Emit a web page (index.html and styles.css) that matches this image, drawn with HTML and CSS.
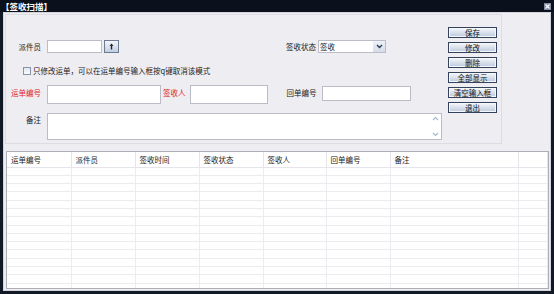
FILE: index.html
```html
<!DOCTYPE html>
<html lang="zh-CN">
<head>
    <meta charset="UTF-8">
    <meta name="viewport" content="width=device-width, initial-scale=1.0">
    <title>签收扫描</title>
    <link rel="stylesheet" href="styles.css">
</head>
<body>
    <div class="window">
        <div class="titlebar">
            <span class="title">【签收扫描】</span>
            <span class="close">
                <svg width="7" height="7" viewBox="0 0 7 7"><path d="M1.5 1.5 L5.5 5.5 M5.5 1.5 L1.5 5.5" stroke="#fff" stroke-width="1.2"/></svg>
            </span>
        </div>
        <div class="body">
            <div class="panel">
                <div class="fields">
                    <div class="row row-courier">
                        <label class="lbl">派件员</label>
                        <input type="text" class="box courier">
                        <button class="pick">
                            <svg width="5" height="7" viewBox="0 0 5 7"><path d="M2.5 0.5 L4.5 3 L3.2 3 L3.2 6.5 L1.8 6.5 L1.8 3 L0.5 3 Z" fill="#1c2436"/></svg>
                        </button>
                        <label class="lbl status-lbl">签收状态</label>
                        <div class="select">
                            <span class="select-text">签收</span>
                            <span class="select-arrow">
                                <svg width="7" height="5" viewBox="0 0 7 5"><path d="M1 1 L3.5 3.5 L6 1" stroke="#2a3550" stroke-width="1.3" fill="none"/></svg>
                            </span>
                        </div>
                    </div>
                    <div class="row row-check">
                        <span class="check"></span>
                        <span>只修改运单，可以在运单编号输入框按q键取消该模式</span>
                    </div>
                    <div class="row row-numbers">
                        <label class="lbl red">运单编号</label>
                        <input type="text" class="box waybill">
                        <label class="lbl red signer-lbl">签收人</label>
                        <input type="text" class="box signer">
                        <label class="lbl receipt-lbl">回单编号</label>
                        <input type="text" class="box receipt">
                    </div>
                    <div class="row row-memo">
                        <label class="lbl">备注</label>
                        <div class="memo">
                            <textarea></textarea>
                            <div class="scroll">
                                <svg width="7" height="5" viewBox="0 0 7 5"><path d="M1 4 L3.5 1.5 L6 4" stroke="#a8b8d0" stroke-width="1.2" fill="none"/></svg>
                                <svg width="7" height="5" viewBox="0 0 7 5"><path d="M1 1 L3.5 3.5 L6 1" stroke="#a8b8d0" stroke-width="1.2" fill="none"/></svg>
                            </div>
                        </div>
                    </div>
                </div>
                <div class="actions">
                    <button>保存</button>
                    <button>修改</button>
                    <button>删除</button>
                    <button>全部显示</button>
                    <button>清空输入框</button>
                    <button>退出</button>
                </div>
            </div>

            <div class="grid">
                <table>
                    <colgroup>
                        <col style="width: 64px">
                        <col style="width: 64px">
                        <col style="width: 64px">
                        <col style="width: 64px">
                        <col style="width: 63px">
                        <col style="width: 64px">
                        <col style="width: 128px">
                        <col>
                    </colgroup>
                    <thead>
                        <tr>
                            <th>运单编号</th>
                            <th>派件员</th>
                            <th>签收时间</th>
                            <th>签收状态</th>
                            <th>签收人</th>
                            <th>回单编号</th>
                            <th>备注</th>
                            <th></th>
                        </tr>
                    </thead>
                    <tbody id="rows"></tbody>
                </table>
            </div>
        </div>
    </div>

    <script>
        // empty grid rows
        const rows = document.getElementById('rows');
        for (let i = 0; i < 15; i++) {
            const tr = document.createElement('tr');
            for (let j = 0; j < 8; j++) {
                tr.appendChild(document.createElement('td'));
            }
            rows.appendChild(tr);
        }
    </script>
</body>
</html>
```

FILE: styles.css
```css
* {
    box-sizing: border-box;
}

body {
    margin: 0;
    font-family: "Noto Sans CJK SC", "DejaVu Sans", sans-serif;
    font-size: 7.5px;
    color: #1a1a1a;
    background-color: #141b28;
}

.window {
    width: 554px;
    height: 294px;
    display: flex;
    flex-direction: column;
    background-color: #121926;
}

.titlebar {
    height: 12px;
    display: flex;
    justify-content: space-between;
    align-items: center;
    padding: 0 3px 0 1px;
    background-color: #0b111c;
}

.title {
    color: #fff;
    font-weight: bold;
    font-size: 8.5px;
    line-height: 12px;
}

.close {
    width: 7px;
    height: 7px;
    display: flex;
    background-color: #7f8ca0;
}

.body {
    flex: 1;
    margin: 0 3px 3px 3px;
    border: 1px solid #d4d4dc;
    background-color: #eeedf2;
    display: flex;
    flex-direction: column;
}

.panel {
    margin: 1px 0 0 1px;
    width: 497px;
    height: 130px;
    border: 1px solid #dddce4;
    display: flex;
}

.fields {
    flex: 1;
    padding-top: 25px;
}

.row {
    display: flex;
    align-items: center;
}

.lbl {
    width: 35px;
    text-align: right;
    margin-right: 6px;
    white-space: nowrap;
}

.red {
    color: #e0242c;
}

.box {
    border: 1px solid #bcbcc6;
    background-color: #fff;
    padding: 0;
    margin: 0;
    font: inherit;
    outline: none;
}

.courier {
    width: 55px;
    height: 13px;
}

.pick {
    width: 15px;
    height: 13px;
    margin-left: 2px;
    padding: 0;
    display: flex;
    align-items: center;
    justify-content: center;
    border: 1px solid #6c7a94;
    background: linear-gradient(#f3f6fb, #c3cee0);
}

.status-lbl {
    width: auto;
    margin: 0 2px 0 167px;
}

.select {
    width: 68px;
    height: 13px;
    display: flex;
    align-items: center;
    border: 1px solid #bcbcc6;
    background-color: #fff;
}

.select-text {
    flex: 1;
    padding-left: 1px;
}

.select-arrow {
    width: 12px;
    height: 11px;
    display: flex;
    align-items: center;
    justify-content: center;
    background: linear-gradient(#eef2f8, #d4dcea);
}

.row-check {
    margin-top: 13px;
    padding-left: 17px;
    height: 9px;
}

.check {
    width: 8px;
    height: 8px;
    margin-right: 2px;
    border: 1px solid #8793a8;
    background: linear-gradient(#e2e6ee, #fbfbfd);
}

.row-numbers {
    margin-top: 10px;
    align-items: flex-start;
}

.row-numbers .lbl {
    line-height: 14px;
    padding-top: 1px;
}

.waybill {
    width: 114px;
    height: 19px;
}

.signer-lbl {
    width: auto;
    margin: 0 4px 0 2px;
}

.signer {
    width: 78px;
    height: 19px;
}

.receipt-lbl {
    width: auto;
    margin: 0 5px 0 19px;
    padding-top: 3px;
}

.receipt {
    width: 89px;
    height: 15px;
    margin-top: 1px;
}

.row-memo {
    margin-top: 9px;
    align-items: flex-start;
}

.row-memo .lbl {
    line-height: 14px;
}

.memo {
    width: 395px;
    height: 27px;
    display: flex;
    border: 1px solid #bcbcc6;
    background-color: #fff;
}

.memo textarea {
    flex: 1;
    border: none;
    resize: none;
    outline: none;
    padding: 0;
    font: inherit;
}

.scroll {
    width: 11px;
    display: flex;
    flex-direction: column;
    justify-content: space-between;
    align-items: center;
    padding: 2px 0;
}

.actions {
    width: 49px;
    margin-right: 4px;
    padding-top: 12px;
    display: flex;
    flex-direction: column;
    gap: 4px;
}

.actions button {
    height: 11px;
    padding: 0;
    font: inherit;
    line-height: 9px;
    color: #111;
    border: 1px solid #34425e;
    box-shadow: inset 0 0 0 1px #f4f7fc;
    background: linear-gradient(#f6f8fc, #bcc8dc);
}

.grid {
    margin: 7px 1px 1px 2px;
    height: 138px;
    border: 1px solid #aeaeb8;
    background-color: #fff;
    overflow: hidden;
}

table {
    width: 100%;
    table-layout: fixed;
    border-collapse: collapse;
}

th {
    height: 15px;
    padding: 0 0 0 4px;
    text-align: left;
    font-weight: normal;
    color: #222;
    border-right: 1px solid #e4e4ea;
    border-bottom: 1px solid #e4e4ea;
}

td {
    height: 8.3px;
    padding: 0;
    border: 1px solid #ebebf0;
    border-top: none;
}

tr td:first-child,
tr th:first-child {
    border-left: none;
}
```
